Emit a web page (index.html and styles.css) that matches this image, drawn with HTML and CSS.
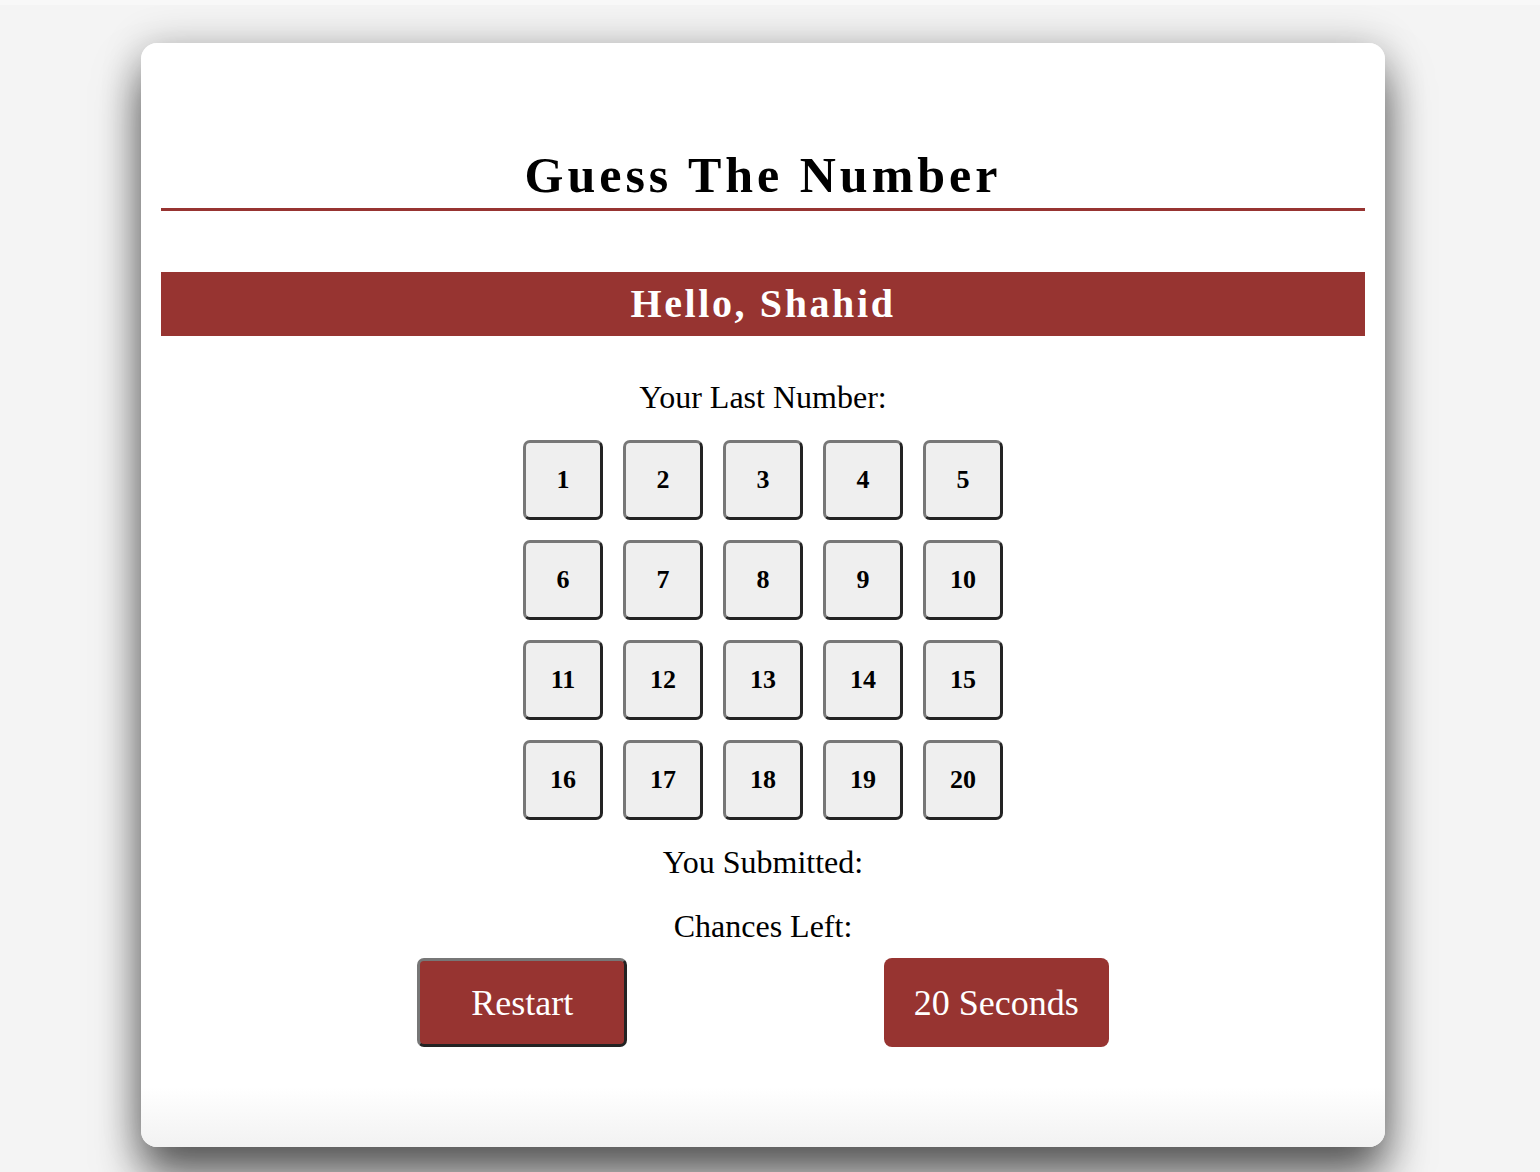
FILE: index.html
```html
<!DOCTYPE html>
<html>
<head>
<meta charset="utf-8">
<title>Guess The Number</title>
<link rel="stylesheet" href="styles.css">
</head>
<body>
<div class="stage">
  <main class="card">
    <h1 class="title">Guess The Number</h1>
    <h2 class="hello">Hello, Shahid</h2>
    <p class="label label-last">Your Last Number:</p>
    <div class="grid">
      <button class="num">1</button><button class="num">2</button><button class="num">3</button><button class="num">4</button><button class="num">5</button>
      <button class="num">6</button><button class="num">7</button><button class="num">8</button><button class="num">9</button><button class="num">10</button>
      <button class="num">11</button><button class="num">12</button><button class="num">13</button><button class="num">14</button><button class="num">15</button>
      <button class="num">16</button><button class="num">17</button><button class="num">18</button><button class="num">19</button><button class="num">20</button>
    </div>
    <p class="label label-sub">You Submitted:</p>
    <p class="label label-chances">Chances Left:</p>
    <div class="actions">
      <button class="restart">Restart</button>
      <div class="timer">20 Seconds</div>
    </div>
  </main>
</div>
</body>
</html>
```

FILE: styles.css
```css
html, body {
  margin: 0;
  padding: 0;
}
body {
  background: #f8f8f8;
  font-family: "Liberation Serif", "Times New Roman", serif;
  color: #000;
}
.stage {
  margin-top: 5px;
  height: 1167px;
  overflow: hidden;
  background: #f4f4f4;
  padding-top: 38px;
  box-sizing: border-box;
}
.card {
  width: 1244px;
  height: 1104px;
  margin-left: 141px;
  box-sizing: border-box;
  padding: 0 20px;
  background: linear-gradient(to bottom, #ffffff calc(100% - 60px), #f2f2f2 100%);
  border-radius: 16px;
  box-shadow: 0 0 40px rgba(0, 0, 0, 0.2), 0 30px 45px rgba(0, 0, 0, 0.6);
}
.title {
  margin: 0;
  padding-top: 102px;
  padding-bottom: 3px;
  font-size: 50px;
  line-height: 60px;
  font-weight: bold;
  letter-spacing: 4px;
  text-align: center;
  border-bottom: 3px solid #973431;
}
.hello {
  margin: 61px 0 0;
  height: 64px;
  line-height: 64px;
  background: #973431;
  color: #fff;
  font-size: 40px;
  font-weight: bold;
  letter-spacing: 2.6px;
  text-align: center;
}
.label {
  margin: 0;
  font-size: 32px;
  line-height: 40px;
  text-align: center;
}
.label-last { margin-top: 41px; }
.label-sub { margin-top: 22px; }
.label-chances { margin-top: 24px; }
.grid {
  display: grid;
  grid-template-columns: repeat(5, 80px);
  grid-auto-rows: 80px;
  gap: 20px;
  justify-content: center;
  margin-top: 23px;
}
.num {
  width: 80px;
  height: 80px;
  box-sizing: border-box;
  background: #efefef;
  border: 3px solid;
  border-color: #777777 #232323 #232323 #777777;
  border-radius: 7px;
  font-family: "Liberation Serif", "Times New Roman", serif;
  font-size: 26px;
  font-weight: bold;
  color: #000;
  padding: 0;
}
.actions {
  display: flex;
  justify-content: space-evenly;
  margin-top: 12px;
}
.restart, .timer {
  height: 89px;
  box-sizing: border-box;
  background: #973431;
  color: #fff;
  font-family: "Liberation Serif", "Times New Roman", serif;
  font-size: 36px;
  display: flex;
  align-items: center;
  justify-content: center;
}
.restart {
  width: 210px;
  border: 3px solid;
  border-color: #777777 #232323 #232323 #777777;
  border-radius: 7px;
  padding: 0;
}
.timer {
  width: 225px;
  border-radius: 8px;
}
```
